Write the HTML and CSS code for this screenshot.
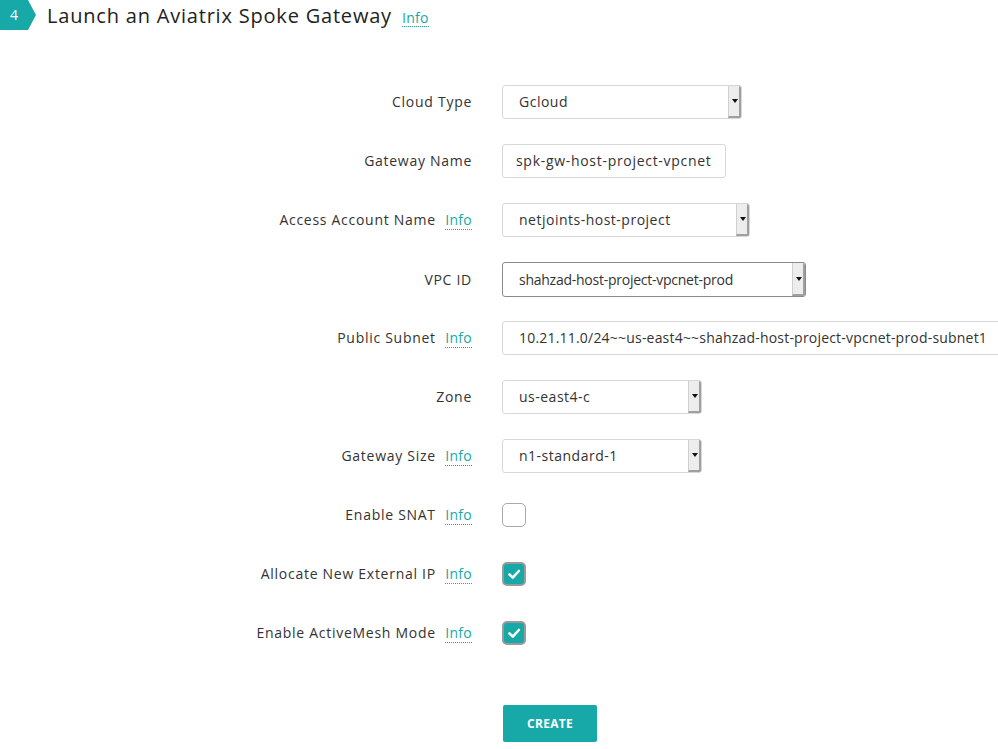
FILE: index.html
```html
<!DOCTYPE html>
<html>
<head>
<meta charset="utf-8">
<link rel="stylesheet" href="styles.css">
</head>
<body>
<div class="header">
  <div class="step">4</div>
  <h1 class="title">Launch an Aviatrix Spoke Gateway</h1>
  <a class="info info-title">Info</a>
</div>
<div class="form">
  <div class="row">
    <div class="label">Cloud Type</div>
    <div class="control"><div class="select w239"><span class="val">Gcloud</span><span class="arrow"></span></div></div>
  </div>
  <div class="row">
    <div class="label">Gateway Name</div>
    <div class="control"><div class="input w223 loose"><span class="val">spk-gw-host-project-vpcnet</span></div></div>
  </div>
  <div class="row">
    <div class="label">Access Account Name <a class="info">Info</a></div>
    <div class="control"><div class="select w247"><span class="val">netjoints-host-project</span><span class="arrow"></span></div></div>
  </div>
  <div class="row">
    <div class="label">VPC ID</div>
    <div class="control"><div class="select dark w303 tight"><span class="val">shahzad-host-project-vpcnet-prod</span><span class="arrow"></span></div></div>
  </div>
  <div class="row">
    <div class="label">Public Subnet <a class="info">Info</a></div>
    <div class="control"><div class="input wide"><span class="val">10.21.11.0/24~~us-east4~~shahzad-host-project-vpcnet-prod-subnet1</span></div></div>
  </div>
  <div class="row">
    <div class="label">Zone</div>
    <div class="control"><div class="select w199"><span class="val">us-east4-c</span><span class="arrow"></span></div></div>
  </div>
  <div class="row">
    <div class="label">Gateway Size <a class="info">Info</a></div>
    <div class="control"><div class="select w199"><span class="val">n1-standard-1</span><span class="arrow"></span></div></div>
  </div>
  <div class="row">
    <div class="label">Enable SNAT <a class="info">Info</a></div>
    <div class="control"><span class="check"></span></div>
  </div>
  <div class="row">
    <div class="label">Allocate New External IP <a class="info">Info</a></div>
    <div class="control"><span class="check on"><svg viewBox="0 0 24 24" width="24" height="24"><path d="M7.5 12.5 L10.8 15.6 L16.8 9" fill="none" stroke="#fff" stroke-width="2.6" stroke-linecap="round" stroke-linejoin="round"/></svg></span></div>
  </div>
  <div class="row">
    <div class="label">Enable ActiveMesh Mode <a class="info">Info</a></div>
    <div class="control"><span class="check on"><svg viewBox="0 0 24 24" width="24" height="24"><path d="M7.5 12.5 L10.8 15.6 L16.8 9" fill="none" stroke="#fff" stroke-width="2.6" stroke-linecap="round" stroke-linejoin="round"/></svg></span></div>
  </div>
  <div class="actions">
    <button class="btn">CREATE</button>
  </div>
</div>
</body>
</html>
```
FILE: styles.css
```css
html, body {
  margin: 0;
  padding: 0;
  background: #fff;
  font-family: "Open Sans", "Liberation Sans", sans-serif;
  color: #333;
  overflow: hidden;
  width: 998px;
  height: 749px;
}
.header {
  display: flex;
  align-items: center;
  height: 30px;
}
.step {
  width: 36px;
  height: 30px;
  background: #17a8a8;
  color: #fff;
  font-size: 14px;
  line-height: 30px;
  padding-left: 10px;
  box-sizing: border-box;
  clip-path: polygon(0 0, 28px 0, 36px 15px, 28px 30px, 0 30px);
  flex: none;
}
.title {
  margin: 0 0 0 11px;
  font-weight: 400;
  font-size: 20px;
  letter-spacing: 0.8px;
  color: #222;
}
.info {
  color: #17a8a8;
  font-size: 14px;
  border-bottom: 1px dotted #17a8a8;
  line-height: 16px;
  letter-spacing: 0.3px;
}
.info-title {
  margin-left: 10px;
  margin-top: 6px;
}
.form {
  margin-top: 55px;
  display: flex;
  flex-direction: column;
  gap: 25px;
}
.row {
  display: grid;
  grid-template-columns: 472px 1fr;
  column-gap: 30px;
  height: 34px;
  align-items: center;
}
.label {
  text-align: right;
  font-size: 14px;
  letter-spacing: 0.72px;
  color: #333;
  white-space: nowrap;
  margin-top: -1px;
}
.label .info {
  margin-left: 5px;
}
.control {
  display: flex;
  align-items: center;
  min-width: 0;
}
.select, .input {
  height: 34px;
  box-sizing: border-box;
  border: 1px solid #d8d8d8;
  border-radius: 3px;
  display: flex;
  align-items: center;
  font-size: 14px;
  letter-spacing: 0.5px;
  color: #333;
  background: #fff;
  overflow: hidden;
  white-space: nowrap;
  flex: none;
}
.select .val {
  padding-left: 16px;
  flex: 1;
  margin-top: -1px;
}
.input .val {
  padding-left: 16px;
  margin-top: -1px;
}
.input.wide {
  letter-spacing: 0.2px;
}
.input.loose .val {
  padding-left: 13px;
  letter-spacing: 0.7px;
}
.select.tight {
  letter-spacing: -0.25px;
}
.select.dark {
  border-color: #8a8a8a;
  height: 35px;
}
.arrow {
  width: 13px;
  align-self: stretch;
  background: #ededed;
  border-left: 1px solid #cfcfcf;
  border-right: 2px solid #a0a0a0;
  border-bottom: 2px solid #a0a0a0;
  position: relative;
  box-sizing: border-box;
}
.arrow::after {
  content: "";
  position: absolute;
  left: 3px;
  top: 50%;
  margin-top: -2px;
  border-left: 3px solid transparent;
  border-right: 3px solid transparent;
  border-top: 4px solid #111;
}
.w239 { width: 240px; }
.w223 { width: 224px; }
.w247 { width: 248px; }
.w303 { width: 304px; }
.w199 { width: 200px; }
.wide { width: 520px; }
.check {
  width: 24px;
  height: 24px;
  box-sizing: border-box;
  border: 1px solid #a9a9a9;
  border-radius: 5px;
  background: #fff;
  display: block;
  position: relative;
}
.check.on {
  background: #17a8a8;
  border: 2px solid #9a9a9a;
}
.check svg {
  position: absolute;
  left: -2px;
  top: -2px;
}
.actions {
  margin-top: 30px;
  padding-left: 503px;
}
.btn {
  width: 94px;
  height: 37px;
  border: none;
  border-radius: 2px;
  background: #17a8a8;
  color: #fff;
  font-family: "Open Sans", "Liberation Sans", sans-serif;
  font-weight: 700;
  font-size: 12px;
  letter-spacing: 0.3px;
  padding: 0;
}
```
